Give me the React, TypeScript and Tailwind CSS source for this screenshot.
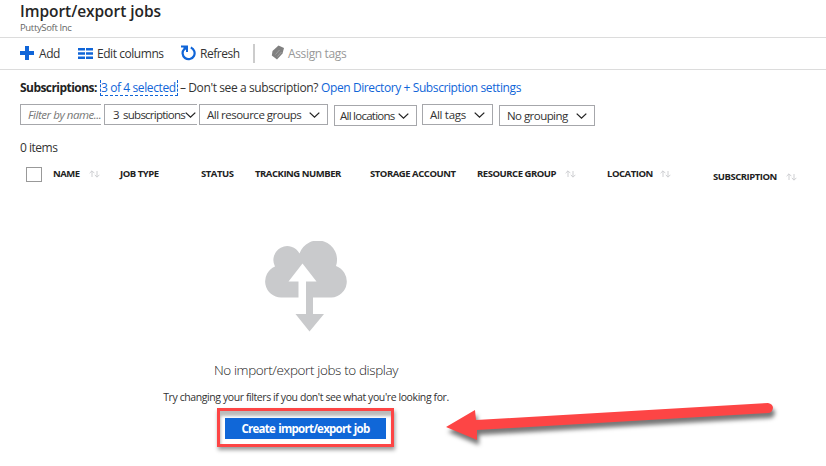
import React from "react";

function Chevron() {
  return (
    <svg width="11" height="6" viewBox="0 0 11 6" className="shrink-0" fill="none" stroke="#222" strokeWidth="1.3">
      <path d="M0.7 0.6 5.5 5.100 10.300 0.6" />
    </svg>
  );
}

function Sort() {
  return (
    <svg width="11" height="8" viewBox="0 0 11 8" className="shrink-0" fill="none" stroke="#c8cacd" strokeWidth="0.9">
      <path d="M3 7V1M0.6 3.2 3 0.8 5.4 3.2M8 1v6M5.8 4.8 8 7.2l2.4-2.4" />
    </svg>
  );
}

const columns = [
  { label: "NAME", cell: "w-[67px]", gap: "w-[36px]", sort: true },
  { label: "JOB TYPE", cell: "w-[81px]", gap: "", sort: false },
  { label: "STATUS", cell: "w-[54px]", gap: "", sort: false },
  { label: "TRACKING NUMBER", cell: "w-[115px]", gap: "", sort: false },
  { label: "STORAGE ACCOUNT", cell: "w-[107px]", gap: "", sort: false },
  { label: "RESOURCE GROUP", cell: "w-[130px]", gap: "w-[88px]", sort: true },
  { label: "LOCATION", cell: "w-[106px]", gap: "w-[53px]", sort: true },
  { label: "SUBSCRIPTION", cell: "w-[100px] pt-[3px]", gap: "w-[73px]", sort: true },
];

export default function App() {
  return (
    <div className="relative h-[466px] w-[826px] overflow-hidden whitespace-nowrap bg-white font-['Open_Sans',sans-serif] text-[12px] tracking-[-0.45px] text-[#333]">
      <header className="h-[38px] border-b border-[#dcdcdc] pl-5">
        <h1 className="h-[21px] text-[15.5px] font-semibold leading-[23px] tracking-[-0.05px] text-[#262626]">Import/export jobs</h1>
        <p className="text-[9.5px] leading-[13px] tracking-[-0.35px] text-[#666]">PuttySoft Inc</p>
      </header>

      <nav className="flex h-8 items-center border-b border-[#dcdcdc] pl-5">
        <button className="flex w-[58px] items-center">
          <svg width="14" height="14" viewBox="0 0 14 14" className="-mt-0.5 mr-[5px]" fill="#1065d8">
            <path d="M5 0h4v5h5v4H9v5H5V9H0V5h5z" />
          </svg>
          Add
        </button>
        <button className="flex w-[103px] items-center">
          <svg width="15" height="11" viewBox="0 0 15 11" className="mr-1" fill="#1065d8">
            <path d="M0 0h7v2.4H0zM8 0h7v2.4H8zM0 4.3h7v2.4H0zM8 4.3h7v2.4H8zM0 8.600h7V11H0zM8 8.600h7V11H8z" />
          </svg>
          Edit columns
        </button>
        <button className="flex w-[72px] items-center">
          <svg width="15" height="16" viewBox="0 0 15 16" className="-mt-0.5 mr-1" fill="none" stroke="#1065d8" strokeWidth="2.2">
            <path d="M9.800 2.600A6 6 0 1 1 3.300 4" />
            <path d="M0 0.500h7v6.500H5V4.500L3 5.500 2.500 2.500H0z" fill="#1065d8" stroke="none" />
          </svg>
          Refresh
        </button>
        <span className="mr-[16px] h-[19px] w-0.5 bg-[#ccc]" />
        <button className="flex items-center tracking-[-0.35px] text-[#999]">
          <svg width="14" height="16" viewBox="0 0 14 16" className="-mt-0.5 mr-[3px]" fill="#808080">
            <path d="M7.500 0.500 13 3 11.500 8.500 6 14.500 0.800 10.500 1.500 6z" />
            <path d="M4.500 9.500 8.500 5M6.500 11.500 10.500 7" stroke="#aaa" strokeWidth="0.8" />
          </svg>
          Assign tags
        </button>
      </nav>

      <main className="pl-5">
        <p className="flex h-[35px] items-center leading-[14px]">
          <span className="w-20 font-bold tracking-[-0.55px] text-[#222]">Subscriptions:</span>
          <a className="mr-[2px] box-border h-4 w-[78px] border border-t-0 border-dashed border-[#1065d8] leading-[15px] tracking-[-0.4px] text-[#1065d8]">3 of 4 selected</a>
          <span className="w-[141px] tracking-[-0.4px]">– Don't see a subscription?</span>
          <a className="tracking-[-0.4px] text-[#1065d8]">Open Directory + Subscription settings</a>
        </p>

        <div className="-mt-px flex h-[22px] leading-[18px]">
          <div className="mr-[3px] flex h-[21px] w-[81px] items-center overflow-hidden border border-r-0 border-[#a6a7ab] pl-[7px] text-[11.5px] italic text-[#777]">Filter by name...</div>
          <div className="mr-[2px] flex h-[21px] w-[93px] items-center justify-between border border-r-0 border-[#a6a7ab] pl-2 pr-px text-[11.5px] tracking-[-0.75px] [word-spacing:2px]">3 subscriptions<Chevron /></div>
          <div className="mr-[6px] flex h-[21px] w-[129px] items-center justify-between border border-[#a6a7ab] pl-[7px] pr-[7px] text-[11.5px] tracking-[-0.5px]">All resource groups<Chevron /></div>
          <div className="mr-[5px] mt-px flex h-[21px] w-[83px] items-center justify-between border border-[#a6a7ab] pl-[5px] pr-[7px] text-[11.5px] tracking-[-0.75px]">All locations<Chevron /></div>
          <div className="mr-[6px] flex h-[21px] w-[71px] items-center justify-between border border-[#a6a7ab] pl-[7px] pr-[7px] text-[11.5px] tracking-[-0.3px]">All tags<Chevron /></div>
          <div className="mt-px flex h-[21px] w-[96px] items-center justify-between border border-[#a6a7ab] pl-[7px] pr-[7px] text-[11.5px] tracking-[-0.55px]">No grouping<Chevron /></div>
        </div>

        <p className="mt-[13px] h-[18px] leading-[18px] tracking-[-0.5px]">0 items</p>

        <div className="mt-[10px] flex h-4 items-start pl-[6px]">
          <span className="mr-[11px] h-[15px] w-4 border border-[#999]" />
          {columns.map((c) => (
            <div key={c.label} className={`-mt-px flex shrink-0 items-center text-[9.5px] font-bold leading-[15px] tracking-[-0.46px] text-[#222] ${c.cell}`}>
              <span className={c.gap}>{c.label}</span>
              {c.sort && <Sort />}
            </div>
          ))}
        </div>
      </main>

      <section className="flex w-[612px] flex-col items-center pt-[58px]">
        <svg width="84" height="91" viewBox="0 0 84 91" className="shrink-0">
          <path d="M17 56.600A16.200 16.200 0 0 1 11 25.500 13.200 13.200 0 0 1 35.500 12.500 18.700 18.700 0 0 1 72 25 16.300 16.300 0 0 1 67.500 56.600z" fill="#c9cacc" />
          <path d="M38.500 22.500 52.500 40.500H42v17h-7.500v-17H24.500z" fill="#fff" />
          <path d="M42 41h7v32h11L45.500 90.500 31.500 73H42z" fill="#c9cacc" />
        </svg>
        <h2 className="mt-[28px] h-5 text-[13.5px] font-light leading-5 tracking-[-0.38px] text-[#222]">No import/export jobs to display</h2>
        <p className="mt-2 h-[18px] text-[10.500px] leading-[18px] tracking-[-0.41px]">Try changing your filters if you don't see what you're looking for.</p>
        <div className="mr-0.5 mt-[2px] flex h-[39px] w-[177px] items-center justify-center border-[3px] border-[#fd4545] pl-px pt-px shadow-[1px_3px_4px_#0006,inset_1px_5px_3px_#0004]">
          <button className="h-[21px] w-[161px] bg-[#1067d8] text-[11.5px] font-bold leading-[22px] tracking-[-0.76px] text-white [word-spacing:1px]">Create import/export job</button>
        </div>
      </section>

      <svg className="absolute left-[430px] top-[390px] drop-shadow-[2px_5px_2px_#0008]" width="360" height="70" viewBox="0 0 360 70">
        <path d="M16 37 45 20 46 30 338 13Q343 14 343 18 342 23 338 23L47 40v10z" fill="#fd4545" />
      </svg>
    </div>
  );
}
